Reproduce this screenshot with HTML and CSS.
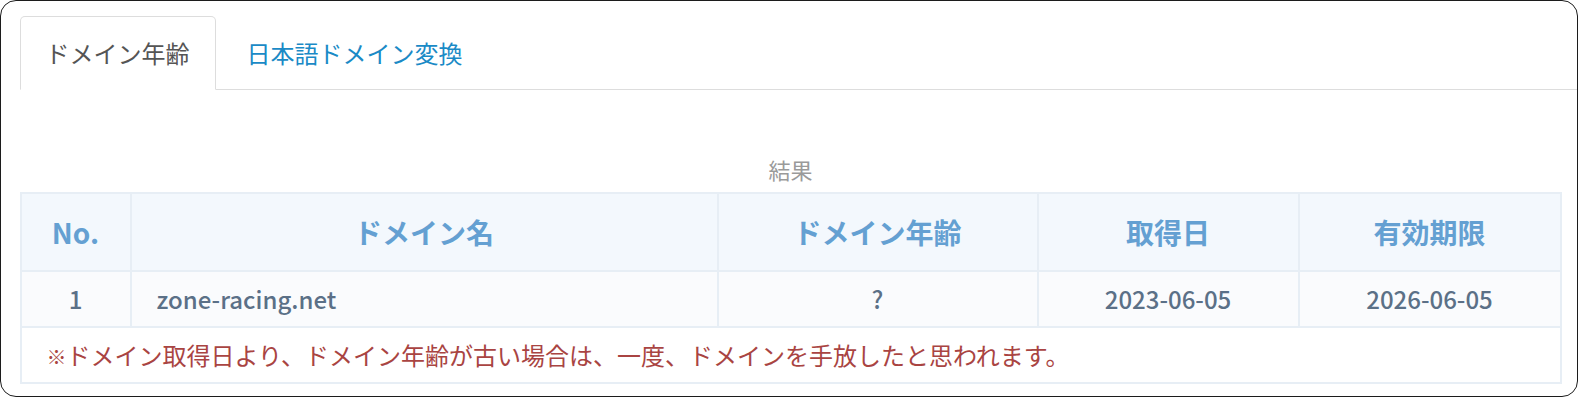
FILE: index.html
```html
<!DOCTYPE html>
<html lang="ja">
<head>
<meta charset="utf-8">
<title>ドメイン年齢</title>
<link rel="stylesheet" href="styles.css">
</head>
<body>
<div class="frame">
  <ul class="tabs">
    <li class="tab active">ドメイン年齢</li>
    <li class="tab link">日本語ドメイン変換</li>
  </ul>
  <div class="content">
    <table class="result">
      <caption>結果</caption>
      <colgroup>
        <col class="w-no">
        <col class="w-name">
        <col class="w-age">
        <col class="w-date">
        <col class="w-exp">
      </colgroup>
      <thead>
        <tr>
          <th>No.</th>
          <th>ドメイン名</th>
          <th>ドメイン年齢</th>
          <th>取得日</th>
          <th>有効期限</th>
        </tr>
      </thead>
      <tbody>
        <tr class="row">
          <td class="center">1</td>
          <td class="name">zone-racing.net</td>
          <td class="center">?</td>
          <td class="center">2023-06-05</td>
          <td class="center">2026-06-05</td>
        </tr>
        <tr>
          <td class="note" colspan="5"><span class="mark">※</span>ドメイン取得日より、ドメイン年齢が古い場合は、一度、ドメインを手放したと思われます。</td>
        </tr>
      </tbody>
    </table>
  </div>
</div>
</body>
</html>
```

FILE: styles.css
```css
html, body {
  margin: 0;
  padding: 0;
  background: #fff;
}

body {
  font-family: "Noto Sans CJK JP", "Noto Sans", sans-serif;
  width: 1580px;
  height: 400px;
  overflow: hidden;
}

.frame {
  box-sizing: border-box;
  width: 1578px;
  height: 397px;
  border: 1.5px solid #1c1c1c;
  border-radius: 16px;
  padding-top: 14.5px;
}

.tabs {
  list-style: none;
  margin: 0 0 0 18.5px;
  padding: 0;
  display: flex;
  border-bottom: 1px solid #dddddd;
}

.tab {
  box-sizing: border-box;
  height: 74px;
  margin-bottom: -1px;
  margin-right: 5px;
  padding: 0 25px;
  display: flex;
  align-items: center;
  font-size: 24px;
  border: 1px solid transparent;
  border-radius: 5px 5px 0 0;
}

.tab.active {
  color: #555555;
  background: #fff;
  border-color: #dddddd #dddddd transparent;
}

.tab.link {
  color: #1a8ac6;
}

.content {
  padding: 62px 16.5px 0 18.5px;
}

.result {
  width: 1540px;
  table-layout: fixed;
  border-collapse: collapse;
  border: 2px solid #e7eef5;
}

.result caption {
  color: #9a9a9a;
  font-size: 22px;
  line-height: 34px;
  padding-bottom: 6px;
  text-align: center;
}

.w-no { width: 110px; }
.w-name { width: 587px; }
.w-age { width: 320px; }
.w-date { width: 261px; }
.w-exp { width: 262px; }

.result th {
  height: 76px;
  padding: 0;
  background: #f3f8fd;
  color: #64a0d2;
  font-size: 28px;
  font-weight: 700;
  text-align: center;
  border: 2px solid #e7eef5;
}

.result td {
  height: 54px;
  padding: 0 25px;
  font-size: 24px;
  color: #5b7087;
  border: 2px solid #e7eef5;
}

.result .row td {
  background: #fafbfd;
  font-weight: 500;
}

.result td.center {
  text-align: center;
}

.result td.name {
  text-align: left;
}

.result td.note {
  color: #a94442;
  font-size: 24px;
  background: #fff;
}

.result .mark {
  font-size: 20px;
  font-weight: 700;
}
```
